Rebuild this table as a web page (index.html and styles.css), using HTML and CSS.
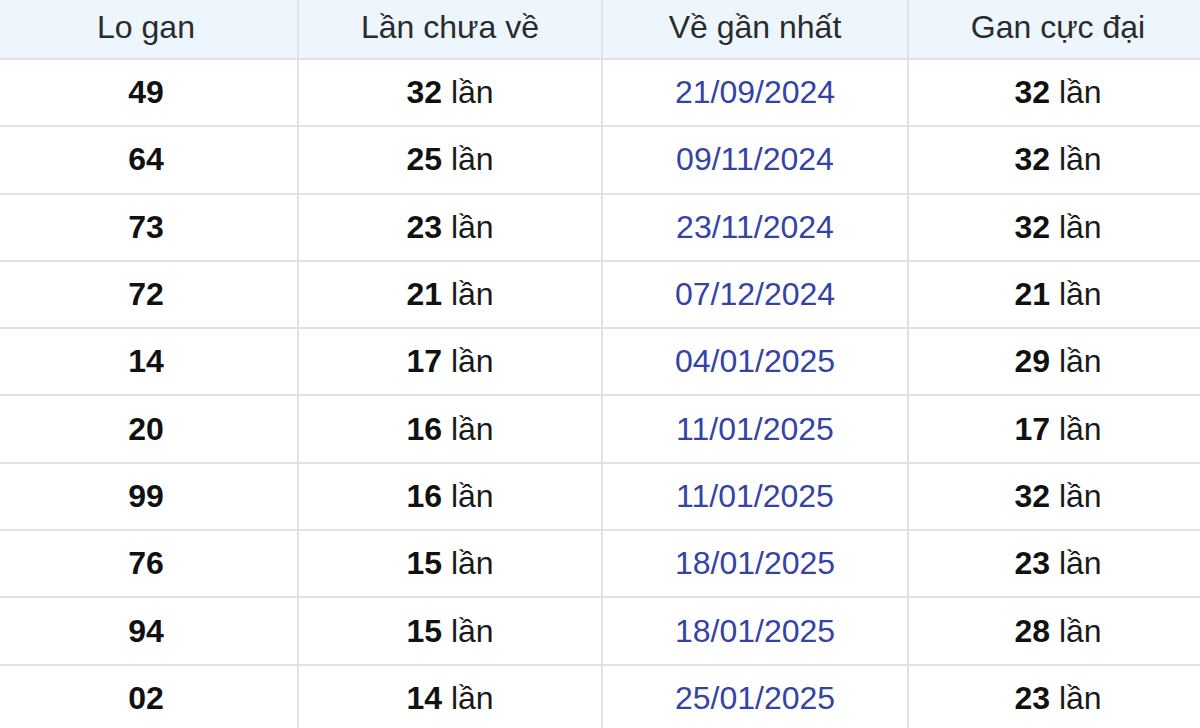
FILE: index.html
```html
<!DOCTYPE html>
<html lang="vi">
<head>
<meta charset="utf-8">
<title>Lo gan</title>
<link rel="stylesheet" href="styles.css">
</head>
<body>
<table class="gan-table">
  <colgroup>
    <col class="c1"><col class="c2"><col class="c3"><col class="c4">
  </colgroup>
  <thead>
    <tr>
      <th>Lo gan</th>
      <th>Lần chưa về</th>
      <th>Về gần nhất</th>
      <th>Gan cực đại</th>
    </tr>
  </thead>
  <tbody>
    <tr><td class="num">49</td><td><b>32</b> lần</td><td class="date">21/09/2024</td><td><b>32</b> lần</td></tr>
    <tr><td class="num">64</td><td><b>25</b> lần</td><td class="date">09/11/2024</td><td><b>32</b> lần</td></tr>
    <tr><td class="num">73</td><td><b>23</b> lần</td><td class="date">23/11/2024</td><td><b>32</b> lần</td></tr>
    <tr><td class="num">72</td><td><b>21</b> lần</td><td class="date">07/12/2024</td><td><b>21</b> lần</td></tr>
    <tr><td class="num">14</td><td><b>17</b> lần</td><td class="date">04/01/2025</td><td><b>29</b> lần</td></tr>
    <tr><td class="num">20</td><td><b>16</b> lần</td><td class="date">11/01/2025</td><td><b>17</b> lần</td></tr>
    <tr><td class="num">99</td><td><b>16</b> lần</td><td class="date">11/01/2025</td><td><b>32</b> lần</td></tr>
    <tr><td class="num">76</td><td><b>15</b> lần</td><td class="date">18/01/2025</td><td><b>23</b> lần</td></tr>
    <tr><td class="num">94</td><td><b>15</b> lần</td><td class="date">18/01/2025</td><td><b>28</b> lần</td></tr>
    <tr><td class="num">02</td><td><b>14</b> lần</td><td class="date">25/01/2025</td><td><b>23</b> lần</td></tr>
  </tbody>
</table>
</body>
</html>
```
FILE: styles.css
```css
html, body {
  margin: 0;
  padding: 0;
  background: #ffffff;
  overflow: hidden;
}

.gan-table {
  border-collapse: collapse;
  table-layout: fixed;
  width: 1214px;
  margin: -2px 0 0 -7px;
  font-family: "Liberation Sans", Arial, sans-serif;
  font-size: 32px;
  color: #1a1a1a;
}

.c1 { width: 304px; }
.c2 { width: 304px; }
.c3 { width: 306px; }
.c4 { width: 300px; }

.gan-table th,
.gan-table td {
  border: 2px solid #e1e1e3;
  text-align: center;
  vertical-align: middle;
  padding: 0;
}

.gan-table th {
  height: 55px;
  background: #eef6fd;
  font-weight: normal;
  color: #2b2b2b;
  padding-bottom: 3px;
}

.gan-table td {
  height: 65.3px;
}

.gan-table b,
.gan-table .num {
  font-weight: bold;
  color: #111111;
}

.gan-table .date {
  color: #3343a6;
}
```
